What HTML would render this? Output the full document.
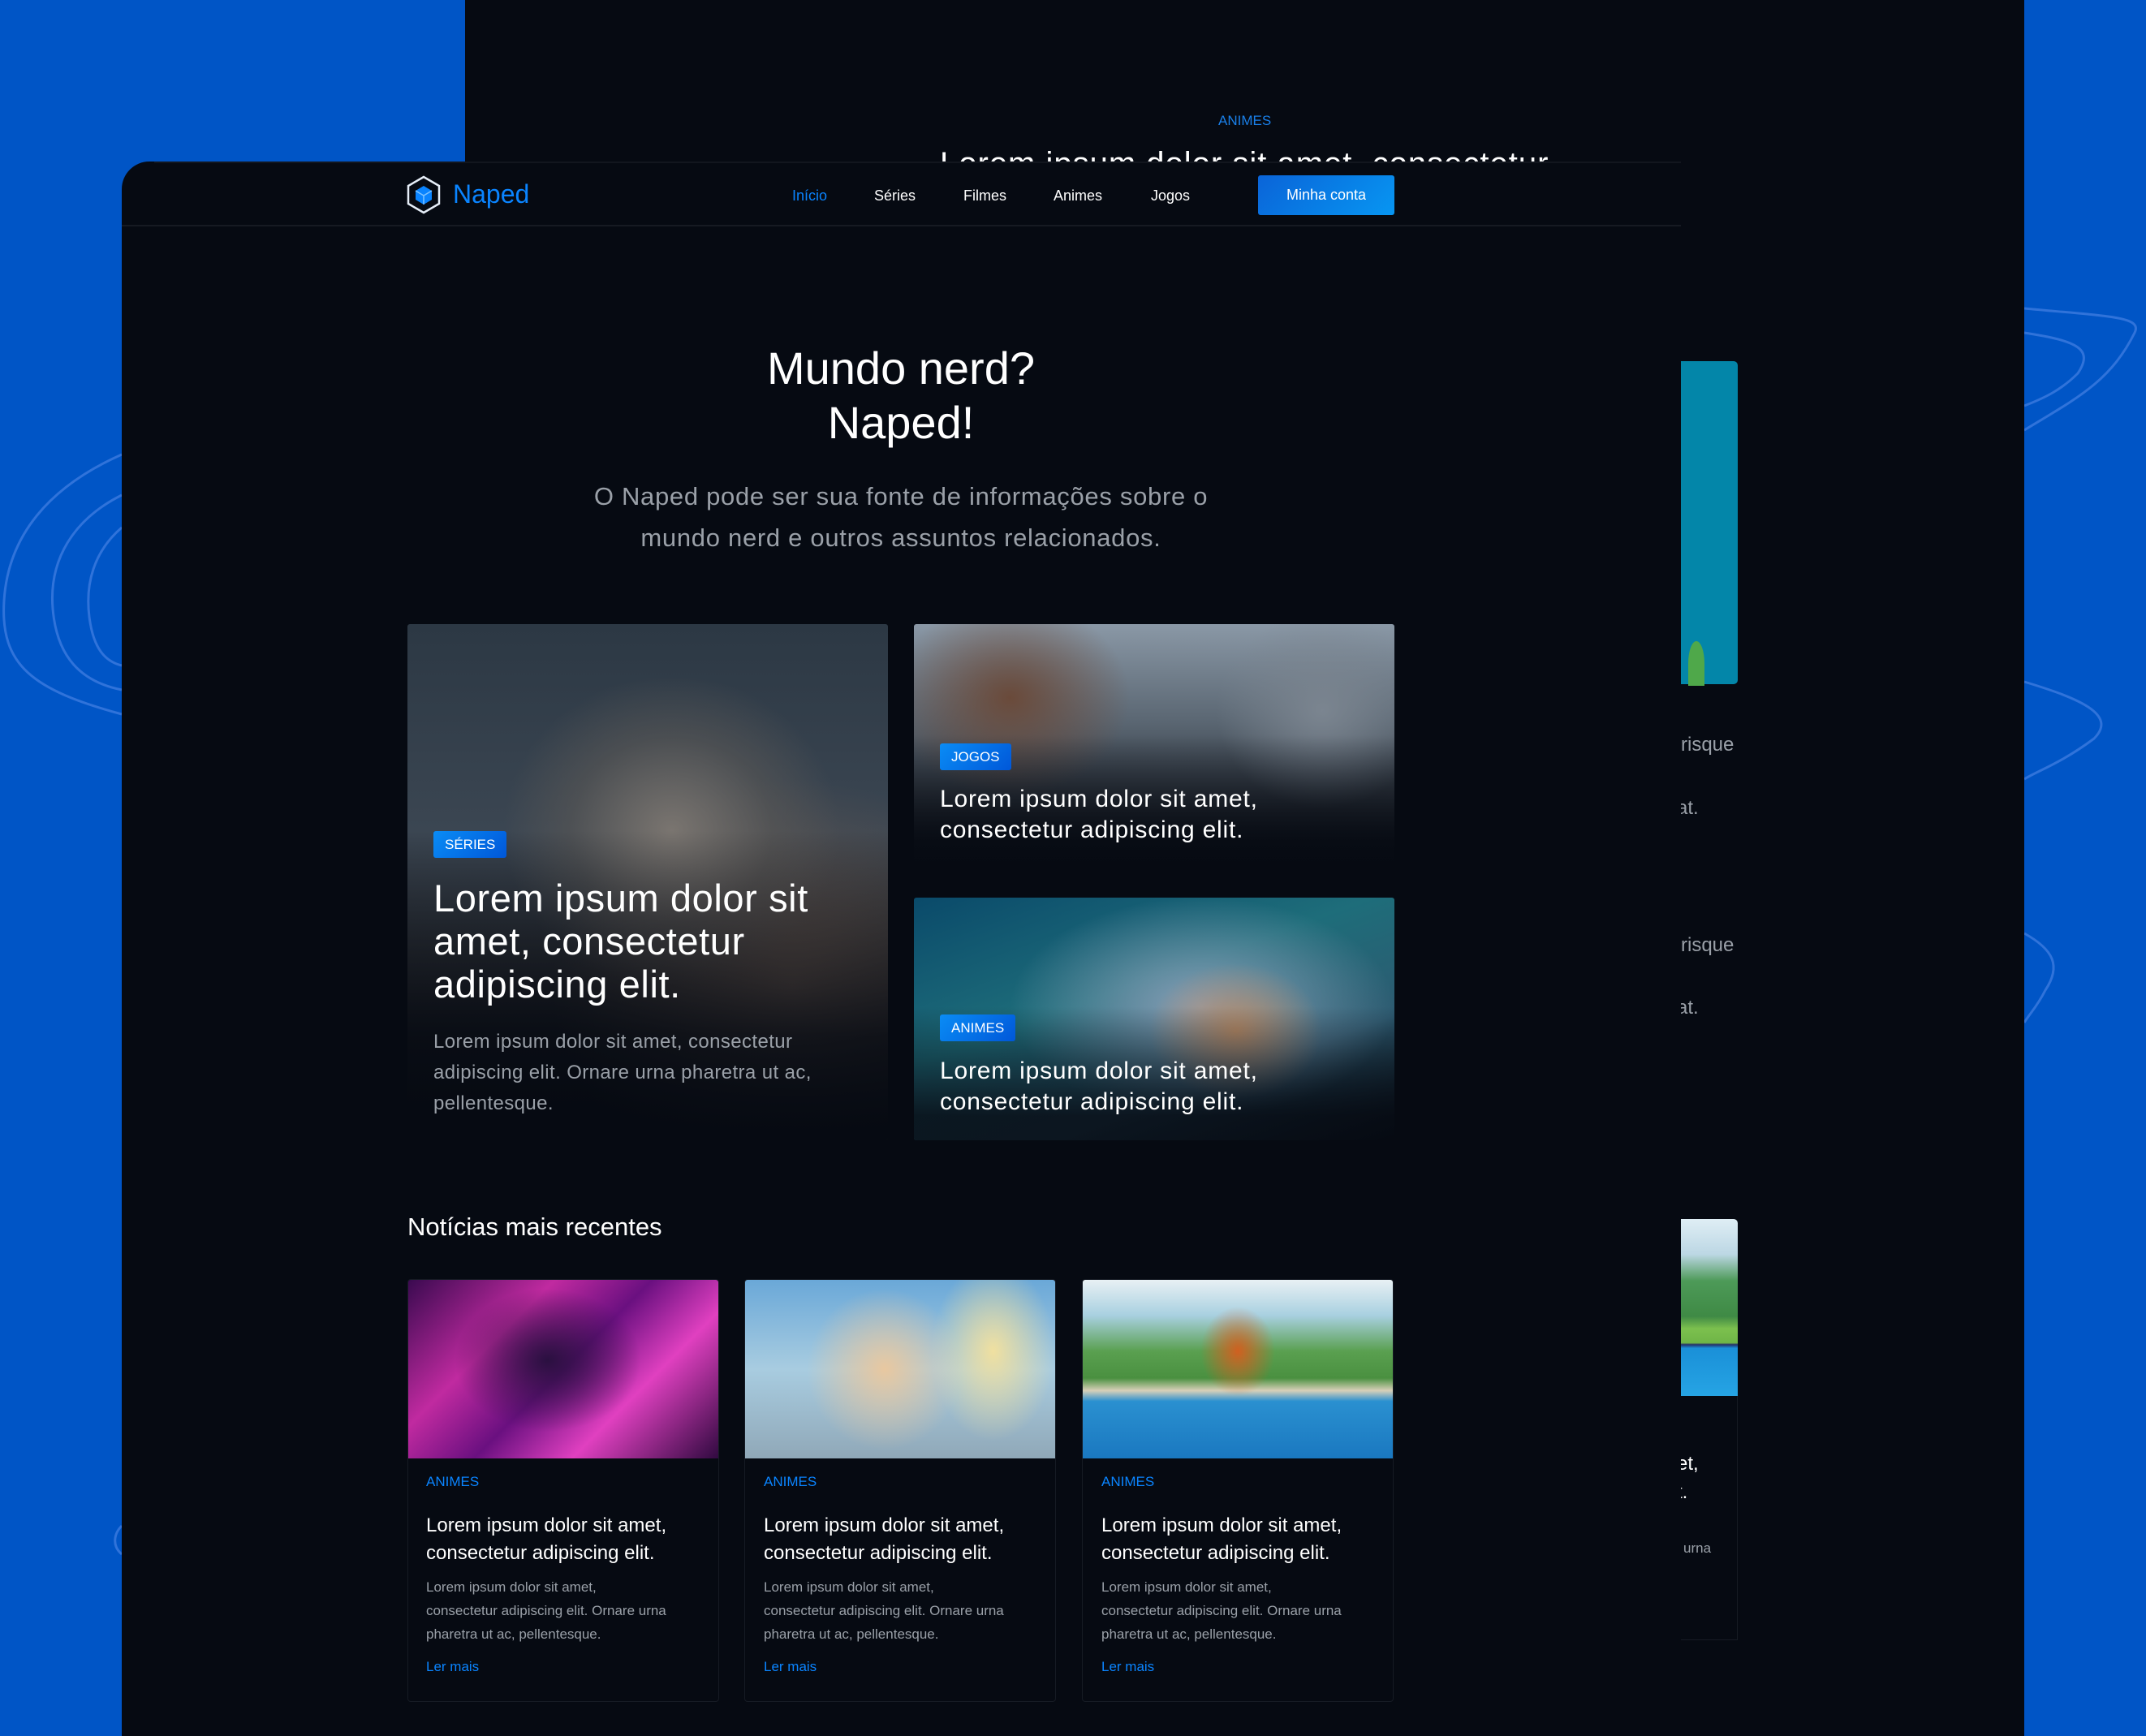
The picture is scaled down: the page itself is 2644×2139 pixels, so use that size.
<!DOCTYPE html>
<html><head><meta charset="utf-8">
<style>
*{margin:0;padding:0;box-sizing:border-box}
body{width:2644px;height:2139px;background:#0055c6;position:relative;overflow:hidden;font-family:"Liberation Sans",sans-serif;color:#fff}
.a{position:absolute;white-space:nowrap}
.badge{position:absolute;background:linear-gradient(135deg,#0a8cf5,#0057d9);color:#fff;font-size:17px;border-radius:3px;padding:0 14px;height:33px;line-height:33px}
.nc{position:absolute;top:1576px;width:384px;height:521px;border:1px solid #161b24;border-radius:4px;overflow:hidden}
.nc .img{height:220px}
</style></head><body>
<svg class="a" style="left:0;top:0" width="2644" height="2139" fill="none" stroke="#3c7be0" stroke-width="3" opacity=".8">
<path d="M150 560 C60 600 10 660 5 740 C0 820 40 850 150 880"/>
<path d="M150 610 C90 640 60 690 65 750 C70 810 100 840 150 850"/>
<path d="M150 650 C115 680 105 720 110 760 C115 800 130 815 150 820"/>
<path d="M2494 380 C2600 390 2640 390 2630 410 C2600 470 2560 490 2494 530"/>
<path d="M2494 410 C2560 420 2580 430 2560 460 C2540 480 2520 490 2494 500"/>
<path d="M2494 840 C2560 860 2610 880 2580 910 C2540 940 2510 950 2494 960"/>
<path d="M2494 1150 C2530 1170 2540 1190 2520 1220 C2510 1240 2500 1250 2494 1260"/>
<path d="M150 1880 C140 1890 138 1905 150 1915"/>
</svg>
<div class="a" style="left:573px;top:0;width:1921px;height:2139px;background:#060a12"></div>
<div class="a" style="left:1501px;top:139px;font-size:17px;color:#1a7fe8">ANIMES</div>
<div class="a" style="left:1158px;top:180px;font-size:40px;letter-spacing:1px;color:#fff">Lorem ipsum dolor sit amet, consectetur</div>
<div class="a" style="left:2071px;top:445px;width:70px;height:398px;background:#0386a9;border-radius:0 5px 5px 0"></div>
<div class="a" style="left:2080px;top:790px;width:20px;height:55px;background:#4fa84a;border-radius:50% 50% 0 0"></div>
<div class="a" style="left:2071px;top:904px;font-size:24px;color:#9aa0a8">risque</div>
<div class="a" style="left:2066px;top:982px;font-size:24px;color:#9aa0a8">at.</div>
<div class="a" style="left:2071px;top:1151px;font-size:24px;color:#9aa0a8">risque</div>
<div class="a" style="left:2066px;top:1228px;font-size:24px;color:#9aa0a8">at.</div>
<div class="a" style="left:2071px;top:1502px;width:70px;height:218px;border-radius:0 5px 0 0;background:linear-gradient(#dfeef5 0%,#bcd7e4 20%,#4d9a58 35%,#3f8a45 55%,#7cc04e 62%,#6fb547 70%,#24306a 71%,#1a90d8 73%,#26a4e4 100%)"></div>
<div class="a" style="left:2071px;top:1720px;width:70px;height:301px;border:1px solid #161b24;border-left:none;border-top:none"></div>
<div class="a" style="left:2066px;top:1790px;font-size:24px;color:#fff">et,</div>
<div class="a" style="left:2066px;top:1825px;font-size:24px;color:#fff">t.</div>
<div class="a" style="left:2074px;top:1898px;font-size:17px;color:#9aa0a8">urna</div>
<div class="a" style="left:150px;top:199px;width:1921px;height:1940px;background:#060a12;border-top-left-radius:34px"></div>
<div class="a" style="left:150px;top:277px;width:1921px;height:2px;background:#161a22"></div>
<div class="a" style="left:190px;top:199px;width:1881px;height:2px;background:#12161e"></div>
<svg class="a" style="left:500px;top:216px" width="44" height="48" viewBox="0 0 44 48" fill="none">
<path d="M22 2 L41 13 L41 35 L22 46 L3 35 L3 13 Z" stroke="#e6eef8" stroke-width="2.5"/>
<path d="M22 13 L32 19 L32 30 L22 36 L12 30 L12 19 Z" fill="#0a84ff"/>
<path d="M12 19 L22 25 L32 19 M22 25 L22 36" stroke="#7fc3ff" stroke-width="1.5"/>
</svg>
<div class="a" style="left:558px;top:221px;font-size:32px;color:#0a84ff">Naped</div>
<div class="a" style="left:976px;top:231px;font-size:18px;color:#0a84ff">Início</div>
<div class="a" style="left:1077px;top:231px;font-size:18px">Séries</div>
<div class="a" style="left:1187px;top:231px;font-size:18px">Filmes</div>
<div class="a" style="left:1298px;top:231px;font-size:18px">Animes</div>
<div class="a" style="left:1418px;top:231px;font-size:18px">Jogos</div>
<div class="a" style="left:1550px;top:216px;width:168px;height:49px;border-radius:3px;background:linear-gradient(135deg,#0a64d8,#0796f2);font-size:18px;text-align:center;line-height:49px">Minha conta</div>
<div class="a" style="left:610px;width:1000px;top:420px;text-align:center;font-size:56px;line-height:67px">Mundo nerd?<br>Naped!</div>
<div class="a" style="left:610px;width:1000px;top:586px;text-align:center;font-size:31px;letter-spacing:0.7px;line-height:51px;color:#9aa0a8">O Naped pode ser sua fonte de informações sobre o<br>mundo nerd e outros assuntos relacionados.</div>
<div class="a" style="left:502px;top:769px;width:592px;height:636px;border-radius:3px;overflow:hidden;background:radial-gradient(ellipse 35% 30% at 55% 40%,#7a7570 0%,rgba(90,88,86,.6) 60%,transparent 100%),radial-gradient(ellipse 50% 40% at 80% 70%,#6a5a50,transparent),linear-gradient(180deg,#2c3844 0%,#3b4652 40%,#2a2c30 70%,#08090d 100%)">
<div style="position:absolute;inset:0;background:linear-gradient(180deg,transparent 40%,rgba(6,10,18,.85) 80%,#060a12 100%)"></div></div>
<div class="badge" style="left:534px;top:1024px">SÉRIES</div>
<div class="a" style="left:534px;top:1080px;font-size:47px;letter-spacing:0.6px;line-height:53px">Lorem ipsum dolor sit<br>amet, consectetur<br>adipiscing elit.</div>
<div class="a" style="left:534px;top:1265px;font-size:24px;letter-spacing:0.4px;line-height:38px;color:#9aa0a8">Lorem ipsum dolor sit amet, consectetur<br>adipiscing elit. Ornare urna pharetra ut ac,<br>pellentesque.</div>
<div class="a" style="left:1126px;top:769px;width:592px;height:303px;border-radius:3px;overflow:hidden;background:radial-gradient(ellipse 22% 40% at 85% 35%,#7b8590,transparent),radial-gradient(ellipse 25% 40% at 20% 30%,#6a4a3a,transparent),linear-gradient(180deg,#8a98a6 0%,#5a6672 40%,#2a3038 75%,#060a12 100%)">
<div style="position:absolute;inset:0;background:linear-gradient(180deg,transparent 45%,rgba(6,10,18,.9) 90%)"></div></div>
<div class="badge" style="left:1158px;top:916px">JOGOS</div>
<div class="a" style="left:1158px;top:966px;font-size:30px;letter-spacing:0.8px;line-height:38px">Lorem ipsum dolor sit amet,<br>consectetur adipiscing elit.</div>
<div class="a" style="left:1126px;top:1106px;width:592px;height:299px;border-radius:3px;overflow:hidden;background:radial-gradient(ellipse 18% 28% at 67% 55%,#b58a66,transparent),radial-gradient(ellipse 40% 45% at 60% 45%,#8aa0b8,transparent),linear-gradient(160deg,#0a4a6a 0%,#1e6d7a 40%,#2d5a70 70%,#060a12 100%)">
<div style="position:absolute;inset:0;background:linear-gradient(180deg,transparent 45%,rgba(6,10,18,.85) 90%)"></div></div>
<div class="badge" style="left:1158px;top:1250px">ANIMES</div>
<div class="a" style="left:1158px;top:1301px;font-size:30px;letter-spacing:0.8px;line-height:38px">Lorem ipsum dolor sit amet,<br>consectetur adipiscing elit.</div>
<div class="a" style="left:502px;top:1494px;font-size:31px">Notícias mais recentes</div>
<div class="nc" style="left:502px"><div class="img" style="background:radial-gradient(ellipse 30% 40% at 45% 45%,#2a1040,transparent),linear-gradient(135deg,#3a0a50,#c02aa0 30%,#6a1080 50%,#e040c0 70%,#300a40)"></div></div>
<div class="nc" style="left:917px"><div class="img" style="background:radial-gradient(ellipse 25% 45% at 45% 50%,#e8c8a0,transparent),radial-gradient(ellipse 20% 50% at 80% 40%,#f0e0a0,transparent),linear-gradient(180deg,#6aa8d8,#a8cce0 50%,#90a8b8)"></div></div>
<div class="nc" style="left:1333px"><div class="img" style="background:radial-gradient(ellipse 12% 25% at 50% 40%,#d06020,transparent),linear-gradient(180deg,#e8f0f4 0%,#a8d0e0 20%,#5aa050 40%,#4a9040 55%,#d8d0b8 62%,#2a90d0 68%,#1a78c0 100%)"></div></div>
<div class="a" style="left:525px;top:1816px;font-size:17px;color:#0a84ff">ANIMES</div>
<div class="a" style="left:941px;top:1816px;font-size:17px;color:#0a84ff">ANIMES</div>
<div class="a" style="left:1357px;top:1816px;font-size:17px;color:#0a84ff">ANIMES</div>
<div class="a" style="left:525px;top:1863px;font-size:24px;line-height:34px">Lorem ipsum dolor sit amet,<br>consectetur adipiscing elit.</div>
<div class="a" style="left:941px;top:1863px;font-size:24px;line-height:34px">Lorem ipsum dolor sit amet,<br>consectetur adipiscing elit.</div>
<div class="a" style="left:1357px;top:1863px;font-size:24px;line-height:34px">Lorem ipsum dolor sit amet,<br>consectetur adipiscing elit.</div>
<div class="a" style="left:525px;top:1941px;font-size:17px;line-height:29px;color:#9aa0a8">Lorem ipsum dolor sit amet,<br>consectetur adipiscing elit. Ornare urna<br>pharetra ut ac, pellentesque.</div>
<div class="a" style="left:941px;top:1941px;font-size:17px;line-height:29px;color:#9aa0a8">Lorem ipsum dolor sit amet,<br>consectetur adipiscing elit. Ornare urna<br>pharetra ut ac, pellentesque.</div>
<div class="a" style="left:1357px;top:1941px;font-size:17px;line-height:29px;color:#9aa0a8">Lorem ipsum dolor sit amet,<br>consectetur adipiscing elit. Ornare urna<br>pharetra ut ac, pellentesque.</div>
<div class="a" style="left:525px;top:2044px;font-size:17px;color:#0a84ff">Ler mais</div>
<div class="a" style="left:941px;top:2044px;font-size:17px;color:#0a84ff">Ler mais</div>
<div class="a" style="left:1357px;top:2044px;font-size:17px;color:#0a84ff">Ler mais</div>
</body></html>
